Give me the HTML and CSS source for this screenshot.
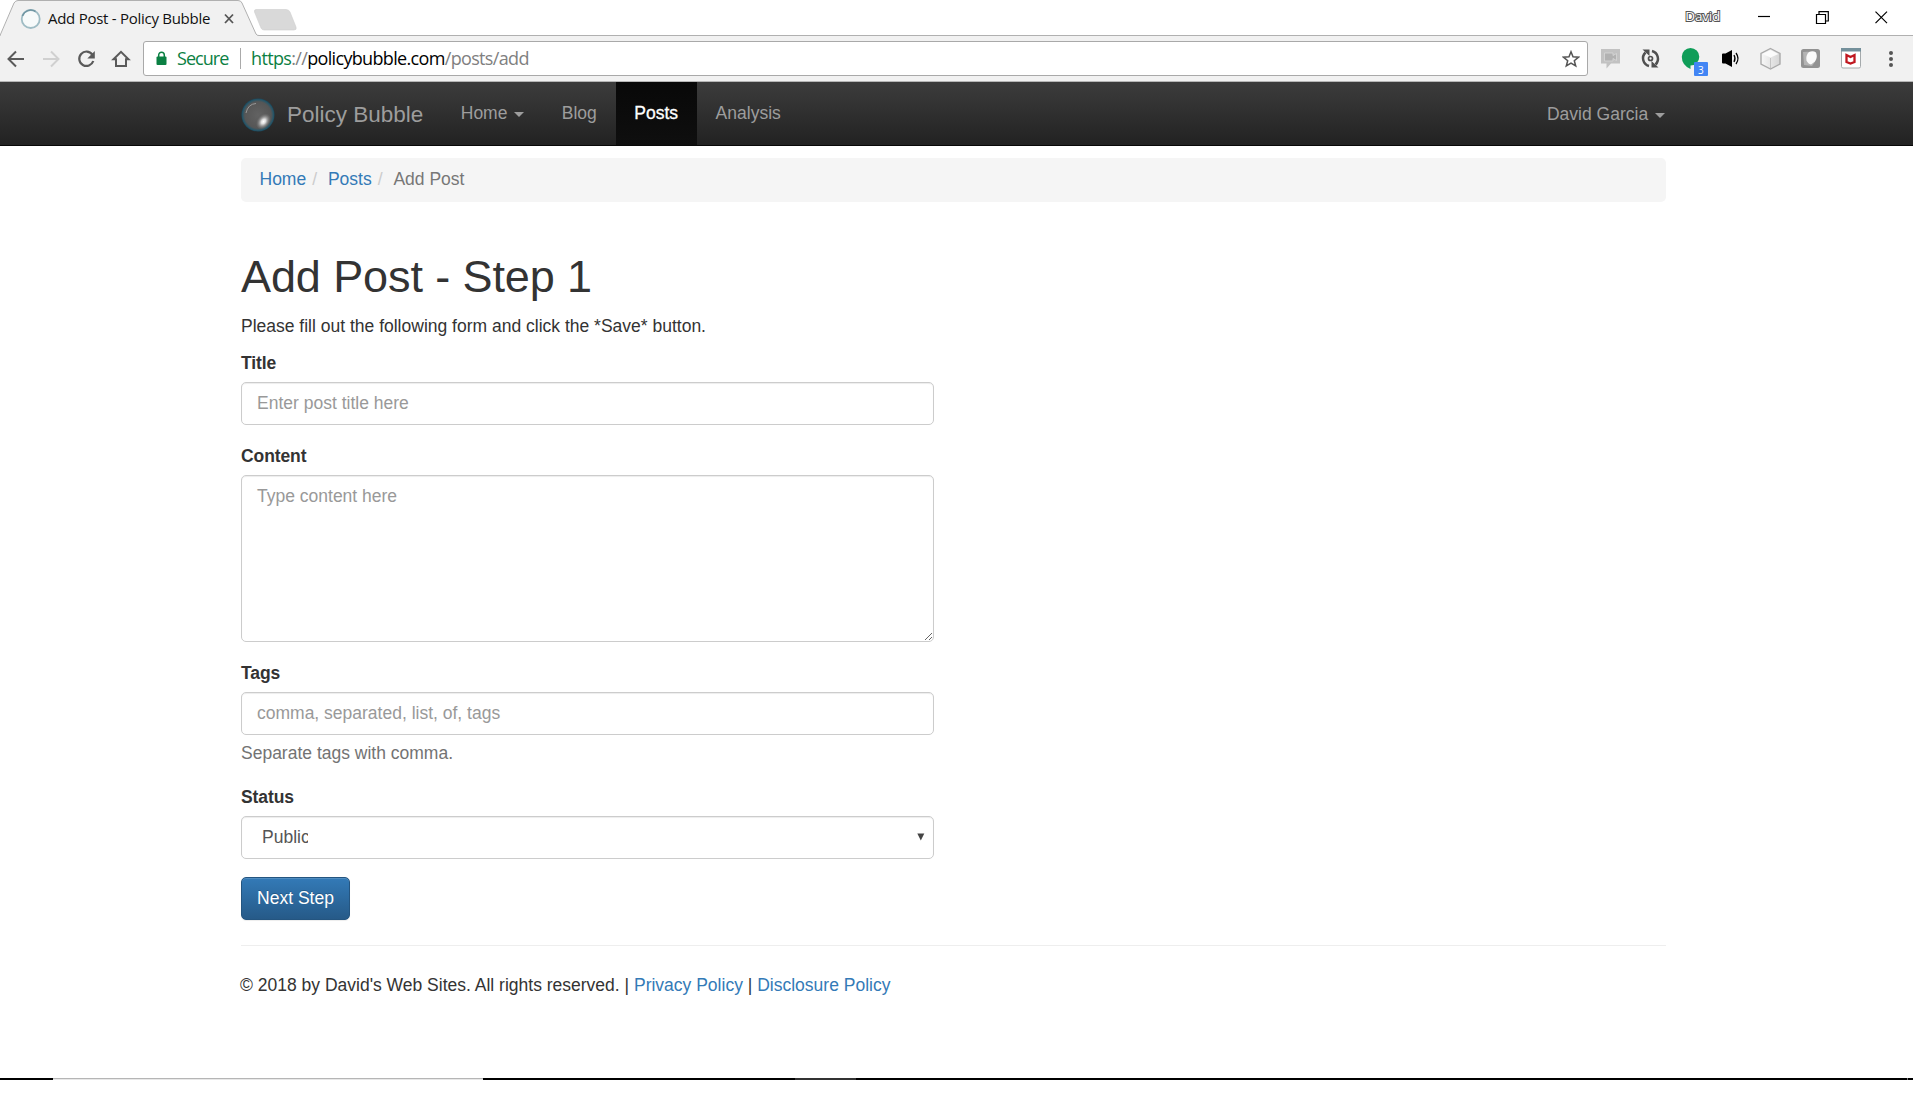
FILE: index.html
```html
<!DOCTYPE html>
<html lang="en">
<head>
<meta charset="utf-8">
<title>Add Post - Policy Bubble</title>
<link rel="stylesheet" href="styles.css">
</head>
<body>
<div class="screen">
  <header class="tabstrip">
    <svg class="tab-shape" width="300" height="36" viewBox="0 0 300 36">
      <path d="M0 36L0.5 35.5L14 3Q15.5 .5 18 .5H238Q241 .5 242 3L256 34Q257 35.500 259 35.500H300V36Z" fill="#f1f1f1"/>
      <path d="M0 35.500L14 3Q15.500 .5 18 .5H238Q241 .5 242 3L256 34Q257 35.500 259 35.500H300" fill="none" stroke="#b0b0b0"/>
      <path d="M256 9.500H286Q289 9.500 290 12L296 27Q297 30 294 30H264Q262 30 261 28L254.500 12Q254 9.500 256 9.500Z" fill="#d9d9d9" stroke="#cfcfcf" stroke-width=".6"/>
      <circle cx="30.700" cy="19" r="9" fill="#f7fafa" stroke="#9fbcc4" stroke-width="1.800"/>
      <path d="M22.500 16a8.800 8.800 0 0 1 13-4.500" fill="none" stroke="#6f95a2" stroke-width="1.500"/>
      <path d="M225 14.500l8 8.500M233 14.500l-8 8.500" stroke="#555" stroke-width="1.800"/>
    </svg>
    <span class="tab-title">Add Post - Policy Bubble</span>
    <span class="profile">David</span>
    <svg class="window-buttons" width="134" height="14" viewBox="0 0 134 14" fill="none" stroke="#000" stroke-width="1.200">
      <path d="M0 5.500h12"/>
      <path d="M58.500 3.500h9v9h-9zM61 3.500V.7h9.300v9.300h-2.800"/>
      <path d="M117.500 .7l11.500 11.500M129 .7L117.500 12.200"/>
    </svg>
  </header>

  <div class="toolbar">
    <svg class="nav-icons" width="134" height="24" viewBox="0 0 134 24" fill="none" stroke-width="2">
      <path d="M24 12H9M16 4.500L8.500 12L16 19.500" stroke="#5a5a5a"/>
      <path d="M43 12H58M51 4.500L58.500 12L51 19.500" stroke="#d0d0d0"/>
      <path d="M92.300 7.500A7.200 7.200 0 1 0 93.300 14" stroke="#5a5a5a" stroke-width="2.200"/>
      <path d="M94.800 4V11.500H87.300Z" fill="#5a5a5a"/>
      <path d="M113.500 12.300L121 4.800L128.500 12.300H126V19H116V12.300Z" stroke="#5a5a5a"/>
    </svg>
    <div class="omnibox">
      <svg class="lock" width="12" height="15" viewBox="0 0 12 15"><rect x=".5" y="5.500" width="10" height="8.500" rx="1" fill="#0b8043"/><path d="M2.700 6V4a2.800 2.800 0 0 1 5.600 0V6" fill="none" stroke="#0b8043" stroke-width="1.500"/></svg>
      <span class="secure">Secure</span>
      <span class="divider"></span>
      <span class="url"><span class="scheme">https</span>://<span class="host">policybubble.com</span>/posts/add</span>
      <svg class="star" width="18" height="18" viewBox="0 0 18 18"><path d="M9 1.800L11 6.800L16.500 7.200L12.300 10.700L13.700 16L9 13.100L4.300 16L5.700 10.700L1.500 7.200L7 6.800Z" fill="none" stroke="#555" stroke-width="1.500"/></svg>
    </div>
    <svg class="extensions" width="313" height="45" viewBox="1600 36 313 45">
      <defs>
        <linearGradient id="cube" x2="1"><stop offset="0" stop-color="#f8f8f8"/><stop offset="1" stop-color="#d5d5d5"/></linearGradient>
      </defs>
      <path d="M1601 49h19v14.500h-9l-4.500 5V63.500H1601z" fill="#c2c2c2"/>
      <path d="M1604.500 53h8.500v2.500l3.500-2v7l-3.500-2v2.500h-8.500z" fill="#b2b2b2" stroke="#d8d8d8" stroke-width=".8"/>
      <g fill="none" stroke="#505050" stroke-width="2.500">
        <path d="M1649 66A8 8 0 0 1 1645.500 52.500M1652 51A8 8 0 0 1 1655.500 64.500"/>
        <circle cx="1650.500" cy="58.500" r="2" stroke-width="1.700"/>
      </g>
      <path d="M1642.500 49.500h7v6.500zM1658.500 67.500h-7v-6.500z" fill="#505050"/>
      <path d="M1690.500 48a8.800 8.800 0 1 1 0 17.600l0 3.500q-8.700-4-8.700-12.300A8.800 8.800 0 0 1 1690.500 48z" fill="#0f9d58"/>
      <rect x="1694" y="62" width="14" height="14" rx="1" fill="#4285f4"/>
      <text class="badge" x="1698" y="73.500">3</text>
      <path d="M1722 54.500q0-1 1-1h2.500l6.500-3.500v17l-6.500-3.500h-2.500q-1 0-1-1z"/>
      <path d="M1734 55q2 3.500 0 7M1736 53q4 5.500 0 11" fill="none" stroke="#000" stroke-width="1.300"/>
      <path d="M1770.500 48.500L1780 53.500V64L1770.500 69L1761 64V53.500Z" fill="url(#cube)" stroke="#aaa" stroke-width="1.400"/>
      <path d="M1770.500 58V68" fill="none" stroke="#c4c4c4"/>
      <path d="M1762.500 54L1770.500 50L1778.500 54L1770.500 57.500Z" fill="#fbfbfb"/>
      <rect x="1801" y="49" width="19" height="19" rx="2.500" fill="#929292"/>
      <path d="M1803 52q6-1 13 1q1 8-4 13l-8-1z" fill="#b4b4b4"/>
      <path d="M1809 52q4-1.500 7 .5q2 5-1 9l-4 3q-3-.5-4.500-4q-1-5 2.500-8.500z" fill="#fafafa"/>
      <rect x="1841.500" y="48.500" width="19" height="19.500" rx="1.500" fill="#fff" stroke="#a5aaac"/>
      <path d="M1841 48h20v3.500h-20z" fill="#74909b"/>
      <path d="M1846.500 55l4 2l4-2v7l-4 1.500l-4-1.500z" fill="none" stroke="#c01820" stroke-width="2.300"/>
      <g fill="#555"><circle cx="1891" cy="53" r="2"/><circle cx="1891" cy="59" r="2"/><circle cx="1891" cy="65" r="2"/></g>
    </svg>
  </div>

  <nav class="navbar">
    <a class="brand">
      <svg width="34" height="34" viewBox="0 0 34 34">
        <defs>
          <radialGradient id="bubble"><stop offset="0" stop-color="#626262"/><stop offset=".8" stop-color="#565656"/><stop offset=".92" stop-color="#2d5666"/><stop offset="1" stop-color="#174b61"/></radialGradient>
          <radialGradient id="glow"><stop offset="0" stop-color="#fff"/><stop offset=".3" stop-color="#ddd"/><stop offset="1" stop-color="#777" stop-opacity="0"/></radialGradient>
        </defs>
        <circle cx="17" cy="17" r="16.500" fill="url(#bubble)"/>
        <ellipse cx="22.500" cy="23.500" rx="6.500" ry="9" fill="url(#glow)" transform="rotate(38 22.500 23.500)"/>
        <path d="M5 15Q7 6 15 5.500" fill="none" stroke="#999" stroke-width="1"/>
      </svg>
      <span>Policy Bubble</span>
    </a>
    <a class="item">Home <i class="caret"></i></a>
    <a class="item">Blog</a>
    <a class="item active">Posts</a>
    <a class="item">Analysis</a>
    <a class="user">David Garcia <i class="caret"></i></a>
  </nav>

  <main class="container">
    <ol class="breadcrumb">
      <li><a>Home</a></li>
      <li><a>Posts</a></li>
      <li class="current">Add Post</li>
    </ol>
    <h1>Add Post - Step 1</h1>
    <p class="intro">Please fill out the following form and click the *Save* button.</p>
    <form class="form">
      <div class="group">
        <label for="title">Title</label>
        <input class="control" id="title" type="text" placeholder="Enter post title here">
      </div>
      <div class="group">
        <label for="content">Content</label>
        <textarea class="control area" id="content" placeholder="Type content here"></textarea>
      </div>
      <div class="group">
        <label for="tags">Tags</label>
        <input class="control" id="tags" type="text" placeholder="comma, separated, list, of, tags">
        <span class="help">Separate tags with comma.</span>
      </div>
      <div class="group">
        <label>Status</label>
        <div class="control select"><span class="value">Public</span>
          <svg width="8" height="8" viewBox="0 0 8 8"><path d="M.3 .5h7L3.800 7.500z" fill="#444"/></svg>
        </div>
      </div>
      <button class="button" type="button">Next Step</button>
    </form>
    <footer class="footer">© 2018 by David's Web Sites. All rights reserved. | <a>Privacy Policy</a> | <a>Disclosure Policy</a></footer>
  </main>

  <div class="taskbar"><i class="window"></i><i class="app"></i><i class="peek"></i></div>
</div>
</body>
</html>
```

FILE: styles.css
```css
* { box-sizing: border-box; }

body {
  margin: 0;
  background: #fff;
  color: #333;
  font: 17.5px/25px "Liberation Sans", Arial, sans-serif;
}

a { color: #337ab7; text-decoration: none; }

.screen {
  display: flex;
  flex-direction: column;
  width: 1913px;
  height: 1080px;
}

/* Browser window */
.tabstrip {
  position: relative;
  display: flex;
  height: 36px;
  border-bottom: 1px solid #b0b0b0;
  font: 15px/20px "Open Sans", sans-serif;
}
.tab-shape { position: absolute; left: 0; top: 0; }
.tab-title {
  position: relative;
  margin: 8px 0 0 48px;
  color: #111;
  letter-spacing: -0.27px;
  white-space: nowrap;
}
.profile {
  margin: 6px 38px 0 auto;
  color: #fff;
  font-size: 13.5px;
  letter-spacing: -0.2px;
  -webkit-text-stroke: 2px #555;
  paint-order: stroke fill;
}
.window-buttons { margin: 11px 21px 0 0; }

.toolbar {
  display: flex;
  align-items: center;
  height: 46px;
  background: #f1f1f1;
  border-bottom: 1px solid #b6b6b6;
}
.nav-icons { margin-right: 9px; }
.omnibox {
  display: flex;
  align-items: center;
  width: 1445px;
  height: 35px;
  padding-left: 12px;
  border: 1px solid #a9a9a9;
  border-radius: 3px;
  background: #fff;
  font: 18px/24px "Open Sans", sans-serif;
  white-space: nowrap;
}
.secure { margin-left: 9px; width: 63px; color: #0b8043; letter-spacing: -0.95px; }
.divider { width: 1px; height: 21px; background: #aaa; }
.secure, .url { margin-top: -1px; }
.url { margin-left: 10px; color: #808080; letter-spacing: -0.66px; }
.scheme { color: #0b8043; }
.host { color: #000; }
.star { margin: 0 7px 0 auto; }
.extensions { margin-left: 12px; }
.badge { fill: #fff; font: 10px "Open Sans", sans-serif; }

/* Site navigation */
.navbar {
  display: flex;
  height: 64px;
  padding: 0 248px 0 241px;
  border-bottom: 1px solid #080808;
  background: linear-gradient(#3c3c3c, #222);
}
.navbar a { color: #9d9d9d; }
.navbar .brand {
  display: flex;
  align-items: center;
  gap: 12px;
  width: 201px;
  padding-top: 2px;
  font-size: 22.5px;
  white-space: nowrap;
}
.brand svg { flex: none; }
.item { padding: 19px 18.750px 0; }
.navbar .active {
  color: #fff;
  background: linear-gradient(#080808, #0f0f0f);
  -webkit-text-stroke: .3px #fff;
}
.user { margin-left: auto; padding-top: 20px; }
.caret {
  display: inline-block;
  margin-left: 2px;
  vertical-align: middle;
  border: 5px solid transparent;
  border-top-color: currentColor;
  border-bottom: 0;
}

/* Page content */
.container { width: 1425px; margin: 12px 0 0 241px; }
.breadcrumb {
  display: flex;
  height: 44px;
  margin: 0;
  padding: 9px 18.500px;
  border-radius: 5px;
  background: #f5f5f5;
  list-style: none;
}
.breadcrumb li + li::before { content: "/\00a0"; padding: 0 6px; color: #ccc; }
.breadcrumb .current { color: #777; }

h1 { margin: 50px 0 13px; font-size: 45px; line-height: 49px; font-weight: 400; letter-spacing: -0.1px; }
.intro { margin: 0 0 12px; height: 25px; }

.form { width: 693px; }
.group { margin-bottom: 19px; }
.group:nth-child(4) { margin-bottom: 18px; }
label { display: block; height: 25px; margin-bottom: 6px; font-weight: 700; letter-spacing: -0.1px; }
.control {
  display: block;
  width: 693px;
  height: 43px;
  padding: 7px 15px;
  border: 1px solid #ccc;
  border-radius: 5px;
  background: #fff;
  box-shadow: inset 0 1px 1px rgba(0, 0, 0, .075);
  color: #555;
  font: inherit;
}
.control::placeholder { color: #999; }
.area { height: 167px; padding-top: 8px; resize: both; }
.select { display: flex; align-items: center; justify-content: space-between; padding: 0 8px 1px 20px; }
.value { width: 46px; overflow: hidden; }
.help { display: block; margin-top: 6px; color: #737373; }
.button {
  display: block;
  width: 109px;
  height: 43px;
  padding: 0;
  border: 1px solid #245580;
  border-radius: 5px;
  background: linear-gradient(#337ab7, #265a88);
  box-shadow: inset 0 1px 0 rgba(255, 255, 255, .15), 0 1px 1px rgba(0, 0, 0, .075);
  color: #fff;
  font: inherit;
  text-shadow: 0 -1px 0 rgba(0, 0, 0, .2);
}
.footer { margin-top: 25px; padding-top: 27px; border-top: 1px solid #eee; text-indent: -1px; }

/* Sliver of the desktop taskbar */
.taskbar { display: flex; height: 2px; margin-top: auto; background: #000; }
.window { width: 430px; margin-left: 53px; background: linear-gradient(#b5b5b5 50%, #e8e8e8 50%); }
.app { width: 61px; margin-left: 312px; background: #333; }
.peek { width: 1px; margin-left: 1051px; background: #777; }
```
